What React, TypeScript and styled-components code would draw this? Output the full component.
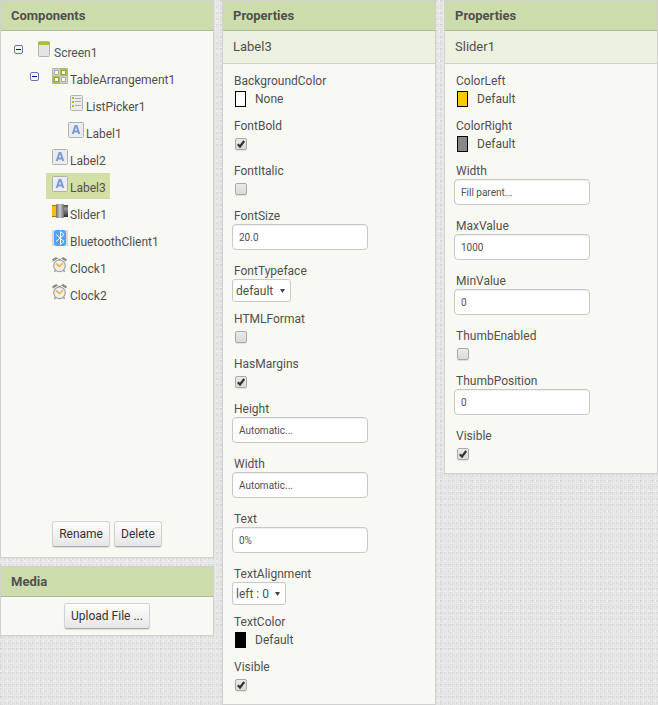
import React, { useId, useState } from "react";
import styled, { createGlobalStyle } from "styled-components";

const GlobalStyle = createGlobalStyle`
  *, *::before, *::after { box-sizing: border-box; }
  body {
    margin: 0;
    min-height: 100vh;
    color: #505050;
    font: 12px/16px Roboto, "Liberation Sans", sans-serif;
    background-color: #ececec;
    background-image:
      radial-gradient(circle at 1px 1px, rgba(0, 0, 0, 0.04) 0 1px, transparent 1px),
      radial-gradient(circle at 1px 1px, rgba(0, 0, 0, 0.03) 0 1px, transparent 1px),
      radial-gradient(circle at 1px 1px, rgba(255, 255, 255, 0.35) 0 1px, transparent 1px),
      repeating-linear-gradient(0deg, rgba(0, 0, 0, 0.025) 0 1px, transparent 1px 2px),
      repeating-linear-gradient(90deg, rgba(0, 0, 0, 0.025) 0 1px, transparent 1px 2px);
    background-size: 4px 6px, 10px 4px, 6px 10px, auto, auto;
  }
`;

const Workspace = styled.main`
  display: grid;
  grid-template-columns: repeat(3, minmax(0, 1fr));
  align-items: start;
  gap: 8px;
`;

const Column = styled.div`
  display: flex;
  flex-direction: column;
  gap: 8px;
`;

const Panel = styled.section`
  border: 1px solid #d0d0d0;
  background: #f8f9f3;
`;

const PanelTitle = styled.h2`
  margin: 0;
  padding: 7px 10px 6px;
  border-bottom: 1px solid #b0b6a2;
  background: #ccdcaa;
  color: #505050;
  font-size: 13px;
  line-height: 16px;
  font-weight: 700;
`;

const Subtitle = styled.h3`
  margin: 0;
  padding: 8px 10px;
  border-bottom: 1px solid #d0d0d0;
  background: #edf1e0;
  font-size: 13px;
  line-height: 16px;
  font-weight: 400;
`;

const Tree = styled.ul`
  display: flex;
  flex-direction: column;
  gap: 1px;
  min-height: 490px;
  margin: 0;
  padding: 7px 12px 0;
  list-style: none;
`;

const TreeRow = styled.li<{ $level: number }>`
  display: flex;
  height: 26px;
  padding-left: ${(p) => p.$level * 16}px;
`;

const ToggleSlot = styled.div`
  width: 17px;
  padding: 7px 0 0 1px;
`;

const Toggle = styled.button`
  display: block;
  width: 9px;
  height: 9px;
  padding: 0;
  border: 0;
  background: none;
`;

const TreeItem = styled.button<{ $selected: boolean }>`
  display: flex;
  gap: 2px;
  padding: 3px 4px 0 6px;
  border: 0;
  background: ${(p) => (p.$selected ? "#d2e0a6" : "transparent")};
  color: inherit;
  font: inherit;
  line-height: 24px;
`;

const Icon = styled.svg`
  display: block;
  flex: none;
  width: 16px;
  height: 16px;
`;

const ButtonBar = styled.div`
  display: flex;
  justify-content: center;
  gap: 4px;
  padding: 0 6px 10px;
`;

const MediaBody = styled.div`
  display: flex;
  justify-content: center;
  padding: 6px;
`;

const PushButton = styled.button`
  height: 26px;
  padding: 0 6px;
  border: 1px solid #d2d2d2;
  border-bottom-color: #aaa;
  border-radius: 3px;
  background: linear-gradient(#fefefe, #e6e6e6);
  box-shadow: 0 1px 1px rgba(0, 0, 0, 0.12);
  color: #333;
  font: inherit;
  white-space: nowrap;
`;

const PropertyList = styled.div`
  display: flex;
  flex-direction: column;
  padding: 9px 9px 0;
`;

const Property = styled.div`
  display: flex;
  flex-direction: column;
  align-items: flex-start;
`;

const PropertyLabel = styled.label`
  padding-left: 2px;
`;

const TextBox = styled.input`
  width: 136px;
  max-width: 100%;
  height: 26px;
  margin: 0 0 13px;
  padding: 0 6px;
  border: 1px solid #c8c8c8;
  border-radius: 4px;
  background: #fff;
  box-shadow: inset 0 1px 1px rgba(0, 0, 0, 0.07);
  color: #505050;
  font: 10px/16px Roboto, "Liberation Sans", sans-serif;
`;

const SelectFrame = styled.div`
  display: grid;
  align-items: center;
  justify-items: end;
  margin: 0 0 9px;
  > * { grid-area: 1 / 1; }
`;

const SelectBox = styled.select`
  appearance: none;
  height: 23px;
  padding: 0 16px 0 3px;
  border: 1px solid #c8c8c8;
  border-radius: 3px;
  background: #fff;
  color: #505050;
  font: inherit;
`;

const SelectArrow = styled.svg`
  width: 5px;
  height: 4px;
  margin-right: 6px;
  pointer-events: none;
`;

const CheckFrame = styled.div`
  display: grid;
  margin: 4px 3px 13px;
  > * { grid-area: 1 / 1; }
`;

const CheckBox = styled.input`
  appearance: none;
  width: 12px;
  height: 12px;
  margin: 0;
  border: 1px solid #aaa;
  border-radius: 2px;
  background: linear-gradient(#eaeaea, #dadada);
  box-shadow: 0 1px 1px rgba(0, 0, 0, 0.1);
`;

const CheckMark = styled.svg`
  width: 12px;
  height: 12px;
  pointer-events: none;
`;

const ColorButton = styled.button`
  display: flex;
  align-items: center;
  gap: 9px;
  margin: 2px 3px 11px;
  padding: 0;
  border: 0;
  background: none;
  color: inherit;
  font: inherit;
`;

const Swatch = styled.span<{ $color: string }>`
  width: 11px;
  height: 16px;
  border: 1px solid #000;
  background: ${(p) => p.$color};
`;

type IconKind = "screen" | "table" | "list" | "label" | "slider" | "bluetooth" | "clock";

function ComponentIcon({ kind }: { kind: IconKind }) {
  switch (kind) {
    case "screen":
      return (
        <Icon viewBox="0 0 16 16" aria-hidden="true">
          <rect x="2.5" y="0.5" width="11" height="15" rx="1" fill="#e4e4e4" stroke="#b4b4b4" />
          <path d="M2 1h12v3H2z" fill="#a5c136" />
        </Icon>
      );
    case "table":
      return (
        <Icon viewBox="0 0 16 16" aria-hidden="true">
          <rect width="16" height="16" rx="1" fill="#b2b2b2" />
          <path d="M1 1h7v7H1zM8 8h7v7H8z" fill="#d2d2d2" />
          <path d="M8 1h7v7H8zM1 8h7v7H1z" fill="#a8c63c" />
          <path d="M2.5 2.5h4v4h-4zM9.5 9.5h4v4h-4z" fill="#fafafa" stroke="#a6a6a6" />
          <path d="M9.5 2.5h4v4h-4zM2.5 9.5h4v4h-4z" fill="#fafafa" stroke="#8fa04c" />
        </Icon>
      );
    case "list":
      return (
        <Icon viewBox="0 0 16 16" aria-hidden="true">
          <rect x="2.5" y="0.5" width="12" height="15" rx="1" fill="#ececec" stroke="#b4b4b4" />
          <path d="M4 2h2v2H4zM4 6h2v2H4zM4 10h2v2H4z" fill="#a5c136" />
          <path d="M7 3.5h6M7 6.5h6M7 10.5h6" stroke="#aaa" />
        </Icon>
      );
    case "label":
      return (
        <Icon viewBox="0 0 16 16" aria-hidden="true">
          <rect x="0.5" y="0.5" width="15" height="15" rx="1" fill="#ececf0" stroke="#b2b2b2" />
          <path d="M4.7 12 7.4 4h1.2l2.7 8M6 9.5h4" fill="none" stroke="#7c9bd2" strokeWidth="2" />
        </Icon>
      );
    case "slider":
      return (
        <Icon viewBox="0 0 16 16" aria-hidden="true">
          <defs>
            <linearGradient id="track" x2="0" y2="1">
              <stop stopColor="#444" />
              <stop offset="0.3" stopColor="#999" />
              <stop offset="1" stopColor="#2c2c2c" />
            </linearGradient>
            <linearGradient id="thumb">
              <stop stopColor="#6c6c6c" />
              <stop offset="0.5" stopColor="#cacaca" />
              <stop offset="1" stopColor="#6c6c6c" />
            </linearGradient>
          </defs>
          <path d="M0 2h5v12H0z" fill="#f8be00" />
          <path d="M0 2.5h5M0 13.5h5" stroke="#a07a00" />
          <path d="M11 2h5v12h-5z" fill="url(#track)" />
          <rect x="4" y="1" width="8" height="14" rx="1" fill="url(#thumb)" />
        </Icon>
      );
    case "bluetooth":
      return (
        <Icon viewBox="0 0 16 16" aria-hidden="true">
          <path d="M0 0h16v16H0z" fill="#d8d8d8" />
          <rect x="2" width="12" height="16" rx="3" fill="#4da3ff" />
          <path d="m4 4.5 8 7-3.5 3v-13l3.5 3-8 7" fill="none" stroke="#fff" />
        </Icon>
      );
    case "clock":
      return (
        <Icon viewBox="0 0 16 16" aria-hidden="true">
          <path d="M0 2.5 4 0l2 1.5-5 3zM15 2.5 11 0 9 1.5l5 3z" fill="#8a8a8a" />
          <path d="m3.5 13-1 2M11.5 13l1 2M6 2.5h3" stroke="#999" strokeWidth="1.5" />
          <circle cx="7.5" cy="8.8" r="5.8" fill="#f1f1f1" stroke="#a2a2a2" strokeWidth="1.2" />
          <path d="m4 6.5 3.5 3L11 6" fill="none" stroke="#f2b55c" strokeWidth="1.7" />
        </Icon>
      );
  }
}

type Node = { name: string; level: number; icon: IconKind; expandable?: boolean };

const nodes: Node[] = [
  { name: "Screen1", level: 0, icon: "screen", expandable: true },
  { name: "TableArrangement1", level: 1, icon: "table", expandable: true },
  { name: "ListPicker1", level: 2, icon: "list" },
  { name: "Label1", level: 2, icon: "label" },
  { name: "Label2", level: 1, icon: "label" },
  { name: "Label3", level: 1, icon: "label" },
  { name: "Slider1", level: 1, icon: "slider" },
  { name: "BluetoothClient1", level: 1, icon: "bluetooth" },
  { name: "Clock1", level: 1, icon: "clock" },
  { name: "Clock2", level: 1, icon: "clock" },
];

function ComponentTree() {
  const [selected, setSelected] = useState("Label3");
  return (
    <Tree>
      {nodes.map((n) => (
        <TreeRow key={n.name} $level={n.level}>
          <ToggleSlot>
            {n.expandable && (
              <Toggle type="button" aria-label={`Collapse ${n.name}`}>
                <svg width="9" height="9" viewBox="0 0 9 9" display="block">
                  <rect x="0.5" y="0.5" width="8" height="8" rx="1.5" fill="#f4f6ff" stroke="#6475b5" />
                  <path d="M2 4.5h5" stroke="#0000b0" />
                </svg>
              </Toggle>
            )}
          </ToggleSlot>
          <TreeItem type="button" $selected={selected === n.name} onClick={() => setSelected(n.name)}>
            <ComponentIcon kind={n.icon} />
            {n.name}
          </TreeItem>
        </TreeRow>
      ))}
    </Tree>
  );
}

type Prop =
  | { name: string; type: "color"; color: string; value: string }
  | { name: string; type: "check"; checked: boolean }
  | { name: string; type: "text"; value: string }
  | { name: string; type: "select"; value: string };

const labelProps: Prop[] = [
  { name: "BackgroundColor", type: "color", color: "#fff", value: "None" },
  { name: "FontBold", type: "check", checked: true },
  { name: "FontItalic", type: "check", checked: false },
  { name: "FontSize", type: "text", value: "20.0" },
  { name: "FontTypeface", type: "select", value: "default" },
  { name: "HTMLFormat", type: "check", checked: false },
  { name: "HasMargins", type: "check", checked: true },
  { name: "Height", type: "text", value: "Automatic..." },
  { name: "Width", type: "text", value: "Automatic..." },
  { name: "Text", type: "text", value: "0%" },
  { name: "TextAlignment", type: "select", value: "left : 0" },
  { name: "TextColor", type: "color", color: "#000", value: "Default" },
  { name: "Visible", type: "check", checked: true },
];

const sliderProps: Prop[] = [
  { name: "ColorLeft", type: "color", color: "#ffc800", value: "Default" },
  { name: "ColorRight", type: "color", color: "#888", value: "Default" },
  { name: "Width", type: "text", value: "Fill parent..." },
  { name: "MaxValue", type: "text", value: "1000" },
  { name: "MinValue", type: "text", value: "0" },
  { name: "ThumbEnabled", type: "check", checked: false },
  { name: "ThumbPosition", type: "text", value: "0" },
  { name: "Visible", type: "check", checked: true },
];

function CheckField({ id, initial }: { id: string; initial: boolean }) {
  const [checked, setChecked] = useState(initial);
  return (
    <CheckFrame>
      <CheckBox id={id} type="checkbox" checked={checked} onChange={(e) => setChecked(e.target.checked)} />
      {checked && (
        <CheckMark viewBox="0 0 12 12" aria-hidden="true">
          <path d="m2.8 6.3 2.2 2.2 4.2-5.5" fill="none" stroke="#333" strokeWidth="2.2" />
        </CheckMark>
      )}
    </CheckFrame>
  );
}

function PropertyField({ prop }: { prop: Prop }) {
  const id = useId();
  return (
    <Property>
      <PropertyLabel htmlFor={id}>{prop.name}</PropertyLabel>
      {prop.type === "color" && (
        <ColorButton id={id} type="button">
          <Swatch $color={prop.color} />
          {prop.value}
        </ColorButton>
      )}
      {prop.type === "check" && <CheckField id={id} initial={prop.checked} />}
      {prop.type === "text" && <TextBox id={id} type="text" defaultValue={prop.value} />}
      {prop.type === "select" && (
        <SelectFrame>
          <SelectBox id={id} defaultValue={prop.value}>
            <option>{prop.value}</option>
          </SelectBox>
          <SelectArrow viewBox="0 0 5 4" aria-hidden="true">
            <path d="M0 0h5L2.5 4z" fill="#444" />
          </SelectArrow>
        </SelectFrame>
      )}
    </Property>
  );
}

function PropertiesPanel({ component, properties }: { component: string; properties: Prop[] }) {
  return (
    <Panel>
      <PanelTitle>Properties</PanelTitle>
      <Subtitle>{component}</Subtitle>
      <PropertyList>
        {properties.map((p) => (
          <PropertyField key={p.name} prop={p} />
        ))}
      </PropertyList>
    </Panel>
  );
}

export default function App() {
  return (
    <>
      <GlobalStyle />
      <Workspace>
        <Column>
          <Panel>
            <PanelTitle>Components</PanelTitle>
            <ComponentTree />
            <ButtonBar>
              <PushButton type="button">Rename</PushButton>
              <PushButton type="button">Delete</PushButton>
            </ButtonBar>
          </Panel>
          <Panel>
            <PanelTitle>Media</PanelTitle>
            <MediaBody>
              <PushButton type="button">Upload File ...</PushButton>
            </MediaBody>
          </Panel>
        </Column>
        <PropertiesPanel component="Label3" properties={labelProps} />
        <PropertiesPanel component="Slider1" properties={sliderProps} />
      </Workspace>
    </>
  );
}
